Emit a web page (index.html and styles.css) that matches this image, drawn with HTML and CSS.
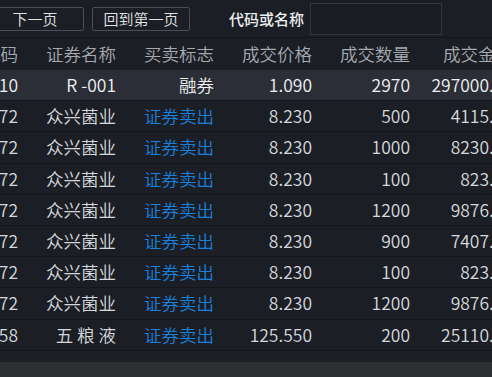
FILE: index.html
```html
<!DOCTYPE html>
<html lang="zh">
<head>
<meta charset="utf-8">
<link rel="stylesheet" href="styles.css">
</head>
<body>
<div class="toolbar">
  <button class="btn btn-first">下一页</button>
  <button class="btn">回到第一页</button>
  <span class="label">代码或名称</span>
  <input class="search" type="text">
</div>
<div class="table">
  <div class="row head">
    <div>代码</div><div>证券名称</div><div>买卖标志</div><div>成交价格</div><div>成交数量</div><div>成交金额</div>
  </div>
  <div class="row sel">
    <div>131810</div><div>R -001</div><div>融券</div><div>1.090</div><div>2970</div><div>297000.00</div>
  </div>
  <div class="row">
    <div>002772</div><div>众兴菌业</div><div class="sell">证券卖出</div><div>8.230</div><div>500</div><div>4115.00</div>
  </div>
  <div class="row">
    <div>002772</div><div>众兴菌业</div><div class="sell">证券卖出</div><div>8.230</div><div>1000</div><div>8230.00</div>
  </div>
  <div class="row">
    <div>002772</div><div>众兴菌业</div><div class="sell">证券卖出</div><div>8.230</div><div>100</div><div>823.00</div>
  </div>
  <div class="row">
    <div>002772</div><div>众兴菌业</div><div class="sell">证券卖出</div><div>8.230</div><div>1200</div><div>9876.00</div>
  </div>
  <div class="row">
    <div>002772</div><div>众兴菌业</div><div class="sell">证券卖出</div><div>8.230</div><div>900</div><div>7407.00</div>
  </div>
  <div class="row">
    <div>002772</div><div>众兴菌业</div><div class="sell">证券卖出</div><div>8.230</div><div>100</div><div>823.00</div>
  </div>
  <div class="row">
    <div>002772</div><div>众兴菌业</div><div class="sell">证券卖出</div><div>8.230</div><div>1200</div><div>9876.00</div>
  </div>
  <div class="row">
    <div>000858</div><div>五 粮 液</div><div class="sell">证券卖出</div><div>125.550</div><div>200</div><div>25110.00</div>
  </div>
</div>
<div class="hscroll"></div>
</body>
</html>
```

FILE: styles.css
```css
html, body {
  margin: 0;
  padding: 0;
  background: #1b1e25;
  overflow: hidden;
  width: 492px;
  height: 377px;
}
body {
  font-family: "Noto Sans CJK SC", "Microsoft YaHei", sans-serif;
  color: #d6d8dc;
  display: flex;
  flex-direction: column;
}
.toolbar {
  height: 37px;
  border-bottom: 1px solid #121418;
  display: flex;
  align-items: center;
  flex-shrink: 0;
}
.btn {
  width: 98px;
  height: 24px;
  box-sizing: border-box;
  background: #1b1e25;
  border: 1px solid #4b4e56;
  border-radius: 2px;
  color: #e2e3e6;
  font-family: inherit;
  font-size: 15px;
  font-weight: 350;
  line-height: 20px;
  padding: 0;
  margin-right: 8px;
}
.btn-first {
  margin-left: -14px;
}
.label {
  margin-left: 31px;
  font-size: 15px;
  color: #eceef0;
  font-weight: 500;
}
.search {
  margin-left: 6px;
  width: 132px;
  height: 32px;
  box-sizing: border-box;
  background: #1a1d23;
  border: 1px solid #34363c;
  padding: 0;
}
.table {
  overflow: hidden;
  flex: 1;
}
.row {
  display: grid;
  grid-template-columns: repeat(5, 98px) 103px;
  margin-left: -72px;
  height: 31.2px;
  box-sizing: border-box;
  border-bottom: 1px solid #14161b;
  align-items: center;
  font-size: 17.5px;
  font-weight: 350;
}
.row > div {
  text-align: right;
  padding-right: 8px;
  white-space: nowrap;
  line-height: 24px;
}
.row.head {
  height: 32px;
  border-bottom: none;
  color: #a6aab1;
}
.row.sel {
  background: #2b2e37;
  color: #eef0f2;
}
.sell {
  color: #1a80dc;
}
.hscroll {
  height: 15px;
  background: #2e2f33;
  flex-shrink: 0;
}
```
